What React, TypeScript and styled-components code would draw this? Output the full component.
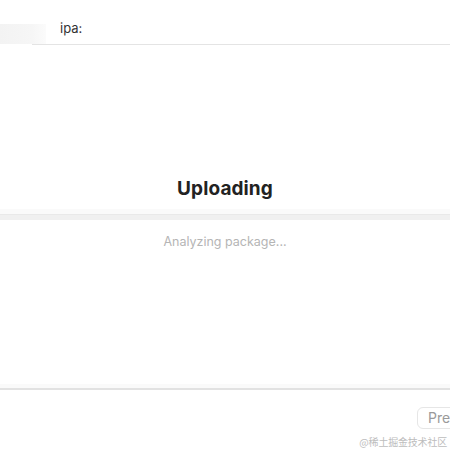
import React from "react";
import styled, { createGlobalStyle } from "styled-components";

const Global = createGlobalStyle`
  html, body { margin: 0; padding: 0; background: #fff; }
  body { font-family: "Helvetica Neue", Inter, "Liberation Sans", Arial, sans-serif; overflow: hidden; }
`;

const Page = styled.div`
  width: 450px;
  height: 450px;
  display: flex;
  flex-direction: column;
  overflow: hidden;
  position: relative;
`;

const Header = styled.div`
  display: flex;
  align-items: flex-end;
  height: 45px;
  box-sizing: border-box;
  padding-top: 20px;
`;

const Ghost = styled.div`
  width: 46px;
  height: 20px;
  margin-bottom: 1px;
  background: linear-gradient(90deg, #f3f3f3 0%, #f6f6f6 70%, #fbfbfb 100%);
  flex: none;
`;

const Label = styled.div`
  flex: 1;
  height: 24px;
  margin-left: -14px;
  padding-left: 28px;
  border-bottom: 1px solid #e4e4e4;
  font-size: 13px;
  line-height: 16px;
  color: #333;
`;

const Body = styled.div`
  display: flex;
  flex-direction: column;
  align-items: center;
  padding-top: 132px;
`;

const Title = styled.div`
  font-size: 19px;
  font-weight: 700;
  color: #222;
  line-height: 24px;
  letter-spacing: 0.1px;
`;

const Track = styled.div`
  align-self: stretch;
  margin-top: 13px;
  height: 5px;
  background: #f0f0f0;
  border-top: 1px solid #e9e9e9;
  box-shadow: 0 -5px 0 #fafafa;
`;

const Status = styled.div`
  margin-top: 14px;
  font-size: 12.5px;
  color: #b5b5b5;
  line-height: 16px;
`;

const Footer = styled.div`
  margin-top: 138px;
  border-top: 2px solid #e2e2e2;
  box-shadow: 0 -4px 0 #fafafa;
  display: flex;
  justify-content: flex-end;
  padding-top: 17px;
`;

const Button = styled.div`
  width: 48px;
  height: 22px;
  margin-right: -15px;
  border: 1px solid #e6e6e6;
  border-radius: 6px;
  box-sizing: border-box;
  font-size: 14px;
  line-height: 20px;
  color: #9a9a9a;
  padding-left: 10px;
`;

const Watermark = styled.div`
  position: absolute;
  right: 3px;
  top: 434px;
  font-size: 10px;
  color: #bdbdbd;
  font-family: "Noto Sans CJK SC", sans-serif;
  letter-spacing: -0.2px;
`;

export default function App() {
  return (
    <Page>
      <Global />
      <Header>
        <Ghost />
        <Label>ipa:</Label>
      </Header>
      <Body>
        <Title>Uploading</Title>
        <Track />
        <Status>Analyzing package...</Status>
      </Body>
      <Footer>
        <Button>Pre</Button>
      </Footer>
      <Watermark>@稀土掘金技术社区</Watermark>
    </Page>
  );
}
